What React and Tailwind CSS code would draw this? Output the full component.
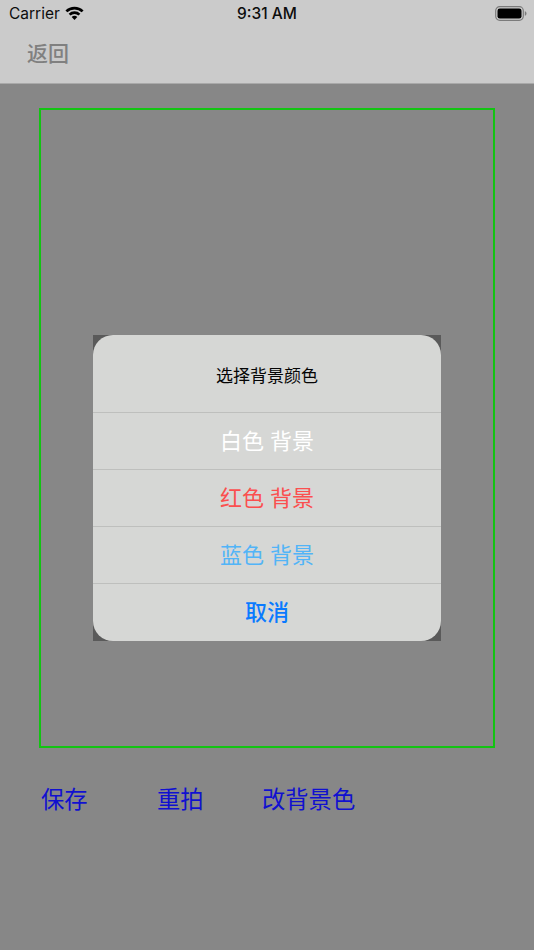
const cjk = "font-['Liberation_Sans','Noto_Sans_CJK_SC',sans-serif]";

function Wifi() {
  return (
    <svg width="19" height="14" viewBox="0 0 19 14" className="ml-[5px] mb-[1px]">
      <path d="M1.400 5.400A11.500 11.500 0 0 1 17.600 5.400" fill="none" stroke="#000" strokeWidth="2.700" />
      <path d="M4.600 8.600A6.900 6.900 0 0 1 14.400 8.600" fill="none" stroke="#000" strokeWidth="2.700" />
      <path d="M9.500 14L6.700 10.900A3.900 3.900 0 0 1 12.300 10.900z" fill="#000" />
    </svg>
  );
}

function Battery() {
  return (
    <svg width="32" height="15" viewBox="0 0 32 15">
      <rect x="0.700" y="0.700" width="27.600" height="13.600" rx="4" fill="none" stroke="#7b7b7b" strokeWidth="1.200" />
      <rect x="2.500" y="2.500" width="24" height="10" rx="2.300" fill="#000" />
      <path d="M29.800 5.200c1 .3 1.700 1.200 1.700 2.300s-.7 2-1.700 2.300z" fill="#7b7b7b" />
    </svg>
  );
}

function Row({ color, children }) {
  return (
    <div className={`h-[57px] flex items-center justify-center border-t border-[#bebfbd] text-[22px] ${color}`}>
      {children}
    </div>
  );
}

export default function App() {
  return (
    <div className={`relative w-[534px] h-[950px] overflow-hidden bg-[#878787] ${cjk}`}>
      <div className="h-[84px] bg-[#cbcbcb] border-b border-[#a9a9a9]">
        <div className="h-[27px] flex items-center pl-[9px] pr-[7px] text-[15.500px] text-[#0d0d0d] relative font-['Inter',sans-serif]">
          <span>Carrier</span>
          <Wifi />
          <span className="flex-1" />
          <Battery />
          <span className="absolute left-0 right-0 text-center font-medium">9:31 AM</span>
        </div>
        <div className="pl-[27px] pt-[9px] text-[21px] leading-[36px] font-medium text-[#808080]">返回</div>
      </div>

      <div className="ml-[39px] mt-[24px] w-[456px] h-[640px] border-2 border-[#12c412]" />

      <div className="flex mt-[32px] pl-[41px] text-[23.300px] leading-[40px] text-[#1010d0]">
        <span className="w-[116px]">保存</span>
        <span className="w-[105px]">重拍</span>
        <span>改背景色</span>
      </div>

      <div className="absolute left-[93px] top-[335px] w-[348px] h-[306px] bg-[#5a5a5a]">
        <div className="h-full rounded-[20px] bg-[#d6d7d5] overflow-hidden">
          <div className="h-[77px] pt-[6px] flex items-center justify-center text-[17px] text-[#050505]">选择背景颜色</div>
          <Row color="text-white">白色 背景</Row>
          <Row color="text-[#fb4f4f]">红色 背景</Row>
          <Row color="text-[#52b4f7]">蓝色 背景</Row>
          <Row color="text-[#0a7aff] font-medium">取消</Row>
        </div>
      </div>
    </div>
  );
}
